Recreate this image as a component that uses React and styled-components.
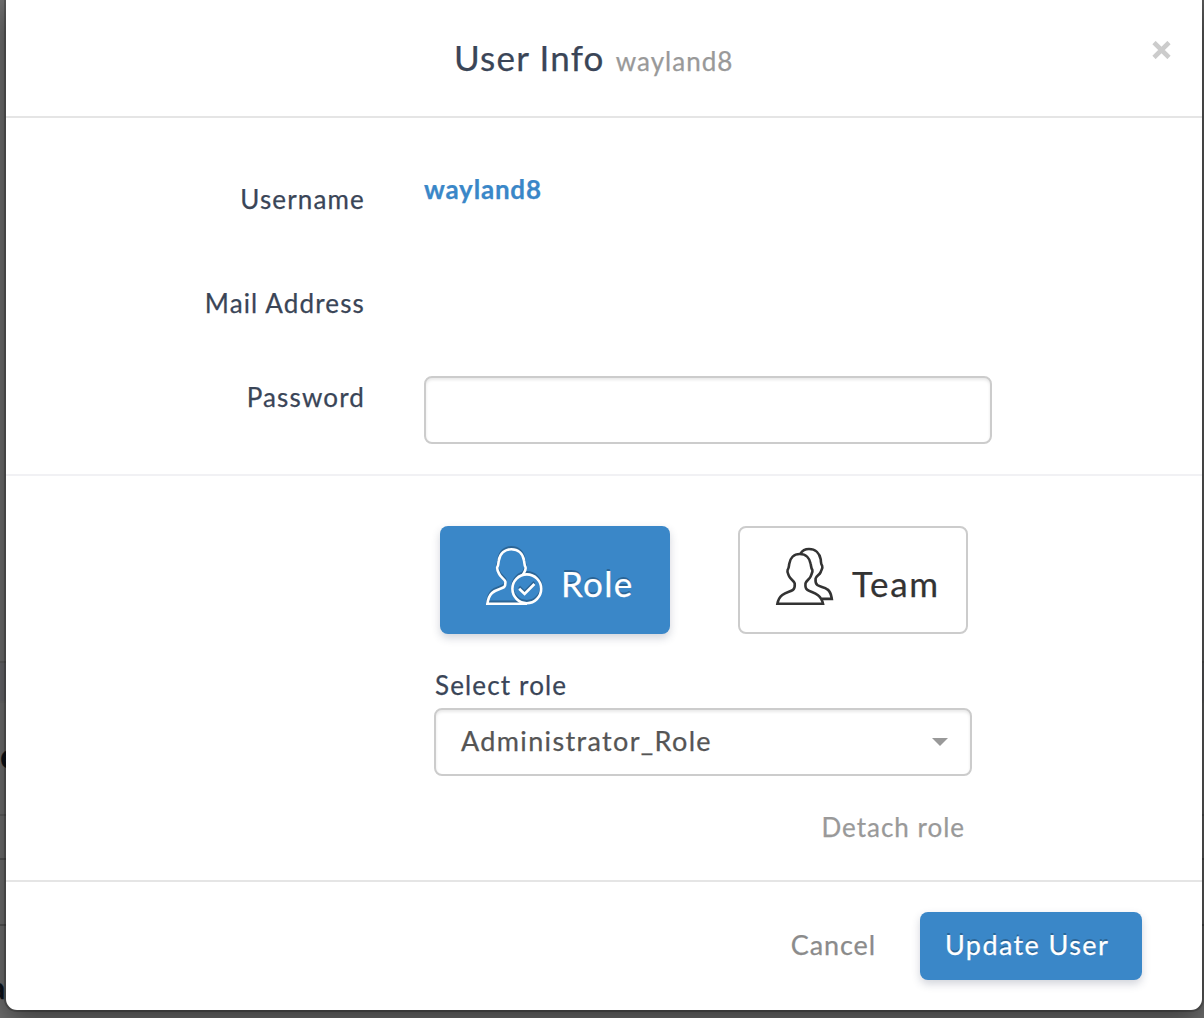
import React from "react";
import styled, { createGlobalStyle } from "styled-components";

const GlobalStyle = createGlobalStyle`
  * { box-sizing: border-box; }
  body {
    margin: 0;
    overflow: hidden;
    font-family: Lato, "Liberation Sans", sans-serif;
    font-size: 26px;
    line-height: 32px;
    -webkit-text-stroke: 0.25px currentColor;
  }
  button { font-family: inherit; cursor: pointer; }
`;

const Page = styled.div`
  position: relative;
  height: 1018px;
  overflow: hidden;
  background: #707070;
`;

const Behind = styled.div`
  position: absolute;
  inset: 0;
  padding-top: 661px;
`;

const BehindRow = styled.div`
  height: ${(p) => p.$height}px;
  border-top: 2px solid ${(p) => p.$line || "#606060"};
  background: ${(p) => p.$fill || "transparent"};
  padding-top: ${(p) => p.$top || 0}px;
  color: #0b1018;
  font-size: ${(p) => p.$size || 26}px;
  font-weight: 700;
  text-indent: ${(p) => p.$indent || 0}px;
`;

const Modal = styled.section`
  position: relative;
  width: 1196px;
  height: 1010px;
  margin-left: 6px;
  background: #fff;
  border-radius: 0 0 11px 11px;
  box-shadow: 0 0 0 2px rgba(0, 0, 0, 0.2), 0 10px 30px rgba(0, 0, 0, 0.5);
  display: flex;
  flex-direction: column;
`;

const Header = styled.header`
  height: 118px;
  border-bottom: 2px solid #e5e5e5;
  display: grid;
  grid-template-columns: 1fr auto;
  align-items: start;
  padding: 35px 31px 0 448px;
`;

const Title = styled.h1`
  margin: 0;
  font-size: 35px;
  line-height: 44px;
  font-weight: 400;
  letter-spacing: 1.2px;
  color: #3a4557;
  white-space: nowrap;
`;

const TitleName = styled.small`
  margin-left: 1px;
  font-size: 26px;
  letter-spacing: 1px;
  color: #999;
`;

const Close = styled.button`
  margin-top: 6px;
  width: 19px;
  height: 18px;
  padding: 0;
  border: 0;
  background: none;
  display: flex;
`;

const Account = styled.div`
  height: 358px;
  padding-top: 55px;
  border-bottom: 2px solid #f1f1f4;
`;

const Field = styled.div`
  display: grid;
  grid-template-columns: 359px 568px;
  column-gap: 59px;
  align-items: start;
  height: ${(p) => p.$height}px;
`;

const Label = styled.label`
  padding-top: ${(p) => p.$top}px;
  text-align: right;
  color: #3a4557;
  letter-spacing: 1.15px;
`;

const Username = styled.strong`
  color: #3a87c8;
  font-weight: 700;
  letter-spacing: 0.8px;
`;

const PasswordInput = styled.input`
  width: 568px;
  height: 68px;
  padding: 0 24px;
  border: 2px solid #ccc;
  border-radius: 8px;
  font: inherit;
  outline: 0;
  box-shadow: inset 0 2px 3px rgba(0, 0, 0, 0.09);
`;

const Access = styled.div`
  height: 406px;
  padding: 50px 0 0 428px;
  border-bottom: 2px solid #e5e5e5;
`;

const Choices = styled.div`
  display: flex;
  gap: 68px;
  padding-left: 6px;
`;

const Choice = styled.button`
  width: 230px;
  height: 108px;
  padding: 0;
  padding-left: ${(p) => (p.$active ? 44 : 35)}px;
  border: ${(p) => (p.$active ? "0" : "2px solid #ccc")};
  border-radius: 8px;
  background: ${(p) => (p.$active ? "#3a87c8" : "#fff")};
  color: ${(p) => (p.$active ? "#fff" : "#333")};
  text-shadow: ${(p) => (p.$active ? "0 -2px 0 rgba(0, 0, 0, 0.25)" : "none")};
  box-shadow: ${(p) => (p.$active ? "0 4px 8px rgba(50, 60, 90, 0.22)" : "none")};
  display: flex;
  align-items: center;
  gap: ${(p) => p.$gap}px;
  font-size: 35px;
  line-height: 44px;
  letter-spacing: ${(p) => p.$ls}px;
`;

const ChoiceIcon = styled.svg`
  flex: none;
  width: 60px;
  height: 62px;
  margin-bottom: 6px;
  fill: none;
  stroke: currentColor;
  stroke-width: 2.6;
  overflow: visible;
  filter: ${(p) => (p.$raised ? "drop-shadow(0 -2px 0 rgba(0, 0, 0, 0.25))" : "none")};
`;

const ChoiceText = styled.span`
  padding-top: 6px;
`;

const SelectLabel = styled.div`
  margin-top: 35px;
  height: 39px;
  padding-left: 1px;
  color: #3a4557;
  letter-spacing: 1.15px;
`;

const Select = styled.div`
  width: 538px;
  height: 68px;
  padding: 0 22px 3px 25px;
  border: 2px solid #ccc;
  border-radius: 8px;
  box-shadow: inset 0 2px 3px rgba(0, 0, 0, 0.09);
  display: flex;
  align-items: center;
  justify-content: space-between;
  font-size: 27px;
  letter-spacing: 1.35px;
  color: #555;
`;

const Caret = styled.span`
  margin-top: 3px;
  border: solid transparent;
  border-width: 8px 8px 0;
  border-top-color: #999;
`;

const Detach = styled.div`
  width: 531px;
  margin-top: 35px;
  text-align: right;
  color: #999;
  letter-spacing: 1px;
`;

const Footer = styled.footer`
  flex: 1;
  display: flex;
  justify-content: flex-end;
  align-items: flex-start;
  padding: 30px 60px 0 0;
`;

const Cancel = styled.button`
  height: 68px;
  margin-right: 44px;
  padding: 0 0 4px;
  border: 0;
  background: none;
  font-size: 27px;
  color: #8b8b8b;
  letter-spacing: 0.9px;
`;

const Update = styled.button`
  width: 222px;
  height: 68px;
  padding: 0 0 4px 25px;
  text-align: left;
  border: 0;
  border-radius: 8px;
  background: #3a87c8;
  color: #fff;
  font-size: 27px;
  letter-spacing: 1.4px;
  text-shadow: 0 -2px 0 rgba(0, 0, 0, 0.25);
  box-shadow: 0 4px 8px rgba(50, 60, 90, 0.22);
`;

const RoleIcon = () => (
  <ChoiceIcon $raised viewBox="0 0 60 62">
    <path d="M38.7 29C40.2 26.5 42.3 24.3 41.5 21.2C40.2 19 40.6 17.4 40 14.5C38.8 7.5 34 3.3 27.4 3.3C20.8 3.3 16 7.5 14.8 14.5C14.2 17.4 14.6 19 13.3 21.2C12.7 23.4 14 25.6 15.1 27.8C16.4 31.3 20.8 33 21.4 35.8C21.5 38 21.6 39.8 20 41.2C17.6 42.8 12 43.2 8 47C4.6 50.2 4 53.5 3.4 57.8H43" />
    <circle cx="42.8" cy="42.8" r="14.4" />
    <path d="M35.2 42.7L40.6 48L50.4 38" />
  </ChoiceIcon>
);

const TeamIcon = () => (
  <ChoiceIcon viewBox="0 0 60 62">
    <path d="M24.8 8C18.7 8 15 12.3 14.2 18C13.8 20.7 14 21.8 12.6 24C11.8 26 13.2 28 14.1 30.3C15.3 33.2 18.8 34.4 19.7 37.3C19.9 40.2 20.2 42.3 18 43.9C15.5 45.8 11.3 46 7.3 49C3.6 51.8 3 54.4 2.4 57.8H48C47.3 54.4 46.4 51.8 43 49.2C39.5 46.4 35.3 46 32.4 43.9C30 42.3 30.2 40.2 30.5 37.3C31.3 34.4 34.7 33.2 35.7 30.3C36.5 28 38 26 37.4 24C36 21.8 36.2 20.7 35.7 18C34.8 12.3 31 8 24.8 8Z" />
    <path d="M25.4 7.8C27.2 4.7 30.4 3 34 3C40.4 3 44.6 7.4 45.7 13.3C46.2 16.4 45.5 17.5 47.2 20C48 22 46.5 23.6 45.7 26C44.7 29 41.2 29.8 40.6 32.6C40.3 35.2 40.3 37.4 42.3 39C45 41 49.4 41 52.4 43.4C56.2 46.2 56.2 49.6 56.8 52.9H47" />
  </ChoiceIcon>
);

export default function App() {
  return (
    <Page>
      <GlobalStyle />
      <Behind>
        <BehindRow $height={40} $fill="#69696d" />
        <BehindRow $height={113} $top={36} $size={37} $line="#6c6c6c">e</BehindRow>
        <BehindRow $height={44} />
        <BehindRow $height={66} $line="#555" />
        <BehindRow $height={93} $top={45} $size={30} $indent={-10} $line="#555">a</BehindRow>
      </Behind>
      <Modal>
        <Header>
          <Title>
            User Info <TitleName>wayland8</TitleName>
          </Title>
          <Close aria-label="Close">
            <svg width="19" height="18" viewBox="0 0 19 18" stroke="#ccc" strokeWidth="4.6">
              <path d="M2 1.5L17 16.5M17 1.5L2 16.5" />
            </svg>
          </Close>
        </Header>
        <Account>
          <Field $height={104}>
            <Label $top={10}>Username</Label>
            <Username>wayland8</Username>
          </Field>
          <Field $height={99}>
            <Label $top={10}>Mail Address</Label>
          </Field>
          <Field $height={68}>
            <Label $top={5}>Password</Label>
            <PasswordInput type="password" />
          </Field>
        </Account>
        <Access>
          <Choices>
            <Choice $active $gap={17} $ls={1.3}>
              <RoleIcon />
              <ChoiceText>Role</ChoiceText>
            </Choice>
            <Choice $gap={17} $ls={1.7}>
              <TeamIcon />
              <ChoiceText>Team</ChoiceText>
            </Choice>
          </Choices>
          <SelectLabel>Select role</SelectLabel>
          <Select>
            Administrator_Role
            <Caret />
          </Select>
          <Detach>Detach role</Detach>
        </Access>
        <Footer>
          <Cancel>Cancel</Cancel>
          <Update>Update User</Update>
        </Footer>
      </Modal>
    </Page>
  );
}
